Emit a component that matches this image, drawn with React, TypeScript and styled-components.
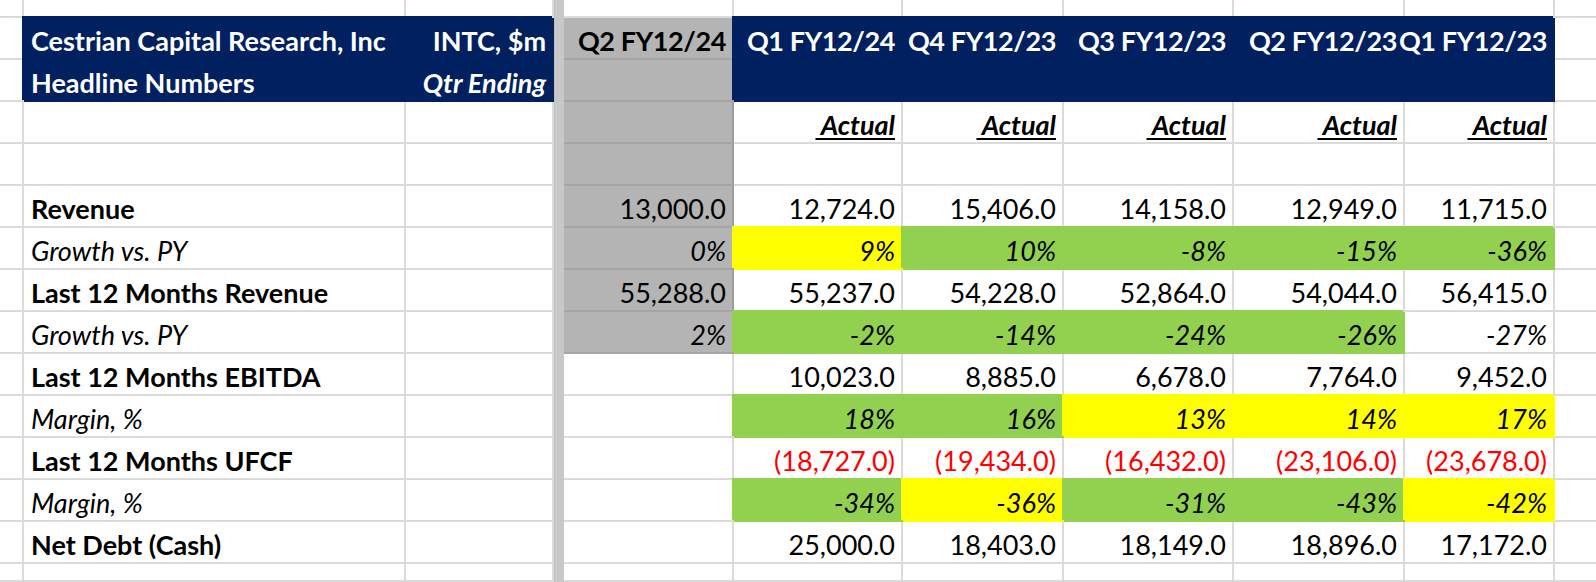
import React from 'react';
import styled, { createGlobalStyle } from 'styled-components';

type Kind = 'plain' | 'navy' | 'shade' | 'green' | 'yellow';
type Tone = 'ink' | 'white' | 'red';

interface CellSpec {
  text?: string;
  kind?: Kind;
  tone?: Tone;
  bold?: boolean;
  italic?: boolean;
  underline?: boolean;
  tight?: boolean;
  align?: 'left' | 'right';
}

const fills: Record<Kind, { bg: string; right: string; bottom: string; cover: boolean }> = {
  plain: { bg: '#ffffff', right: '#dadada', bottom: '#dadada', cover: false },
  navy: { bg: '#002060', right: '#06215c', bottom: '#002060', cover: true },
  shade: { bg: '#b4b4b4', right: '#9d9d9d', bottom: '#a5a5a5', cover: false },
  green: { bg: '#92d050', right: '#92d050', bottom: '#92d050', cover: true },
  yellow: { bg: '#ffff00', right: '#ffff00', bottom: '#ffff00', cover: true },
};

const tones: Record<Tone, string> = {
  ink: '#000000',
  white: '#ffffff',
  red: '#ff0000',
};

const GlobalStyle = createGlobalStyle`
  html, body {
    margin: 0;
    padding: 0;
    background: #ffffff;
    overflow: hidden;
  }
  body {
    font-family: Lato, 'Open Sans', sans-serif;
  }
`;

const Sheet = styled.div`
  display: grid;
  grid-template-columns: 24px 382px 148px 10px 170px 169px 161px 170px 171px 150px 60px;
  grid-template-rows: 18px repeat(13, 42px) 18px;
  width: 1596px;
  height: 582px;
  overflow: hidden;
  background: #ffffff;
`;

const Cell = styled.div<{
  $kind: Kind;
  $tone: Tone;
  $align: 'left' | 'right';
  $bold: boolean;
  $italic: boolean;
  $tight: boolean;
}>`
  box-sizing: border-box;
  display: flex;
  align-items: flex-end;
  justify-content: ${(p) => (p.$align === 'right' ? 'flex-end' : 'flex-start')};
  padding: 0 6px 1px 7px;
  background: ${(p) => fills[p.$kind].bg};
  border-right: 2px solid ${(p) => fills[p.$kind].right};
  border-bottom: 2px solid ${(p) => fills[p.$kind].bottom};
  box-shadow: ${(p) => (fills[p.$kind].cover ? `-2px -2px 0 0 ${fills[p.$kind].bg}` : 'none')};
  color: ${(p) => tones[p.$tone]};
  font-size: 27px;
  line-height: 32px;
  font-weight: ${(p) => (p.$bold ? 700 : 400)};
  font-style: ${(p) => (p.$italic ? 'italic' : 'normal')};
  letter-spacing: ${(p) => (p.$tight ? '-0.4px' : 'normal')};
  white-space: pre;
`;

const Underlined = styled.span`
  text-decoration: underline;
  text-decoration-thickness: 2px;
  text-underline-offset: 3px;
  text-decoration-skip-ink: none;
`;

const Splitter = styled.div`
  background: #c8c8c8;
  border-left: 1px solid #bfbfbf;
`;

const quarters = ['Q1 FY12/24', 'Q4 FY12/23', 'Q3 FY12/23', 'Q2 FY12/23', 'Q1 FY12/23'];

interface Metric {
  label: string;
  emphasis: 'bold' | 'italic';
  forecast?: string;
  shaded?: boolean;
  tone?: Tone;
  values: [string, Kind?][];
}

const metrics: Metric[] = [
  {
    label: 'Revenue',
    emphasis: 'bold',
    forecast: '13,000.0',
    shaded: true,
    values: [['12,724.0'], ['15,406.0'], ['14,158.0'], ['12,949.0'], ['11,715.0']],
  },
  {
    label: 'Growth vs. PY',
    emphasis: 'italic',
    forecast: '0%',
    shaded: true,
    values: [['9%', 'yellow'], ['10%', 'green'], ['-8%', 'green'], ['-15%', 'green'], ['-36%', 'green']],
  },
  {
    label: 'Last 12 Months Revenue',
    emphasis: 'bold',
    forecast: '55,288.0',
    shaded: true,
    values: [['55,237.0'], ['54,228.0'], ['52,864.0'], ['54,044.0'], ['56,415.0']],
  },
  {
    label: 'Growth vs. PY',
    emphasis: 'italic',
    forecast: '2%',
    shaded: true,
    values: [['-2%', 'green'], ['-14%', 'green'], ['-24%', 'green'], ['-26%', 'green'], ['-27%']],
  },
  {
    label: 'Last 12 Months EBITDA',
    emphasis: 'bold',
    values: [['10,023.0'], ['8,885.0'], ['6,678.0'], ['7,764.0'], ['9,452.0']],
  },
  {
    label: 'Margin, %',
    emphasis: 'italic',
    values: [['18%', 'green'], ['16%', 'green'], ['13%', 'yellow'], ['14%', 'yellow'], ['17%', 'yellow']],
  },
  {
    label: 'Last 12 Months UFCF',
    emphasis: 'bold',
    tone: 'red',
    values: [['(18,727.0)'], ['(19,434.0)'], ['(16,432.0)'], ['(23,106.0)'], ['(23,678.0)']],
  },
  {
    label: 'Margin, %',
    emphasis: 'italic',
    values: [['-34%', 'green'], ['-36%', 'yellow'], ['-31%', 'green'], ['-43%', 'green'], ['-42%', 'yellow']],
  },
  {
    label: 'Net Debt (Cash)',
    emphasis: 'bold',
    values: [['25,000.0'], ['18,403.0'], ['18,149.0'], ['18,896.0'], ['17,172.0']],
  },
];

// each row is B..I (label, unit, forecast, five quarters); A, the splitter and J are added around it
const blankRow = (forecastKind: Kind = 'plain'): CellSpec[] => [
  {},
  {},
  { kind: forecastKind },
  {},
  {},
  {},
  {},
  {},
];

const buildRows = (): CellSpec[][] => {
  const head1: CellSpec[] = [
    { text: 'Cestrian Capital Research, Inc', kind: 'navy', tone: 'white', bold: true, align: 'left' },
    { text: 'INTC, $m', kind: 'navy', tone: 'white', bold: true },
    { text: 'Q2 FY12/24', kind: 'shade', bold: true, tight: true },
    ...quarters.map((q): CellSpec => ({ text: q, kind: 'navy', tone: 'white', bold: true, tight: true })),
  ];
  const head2: CellSpec[] = [
    { text: 'Headline Numbers', kind: 'navy', tone: 'white', bold: true, align: 'left' },
    { text: 'Qtr Ending', kind: 'navy', tone: 'white', bold: true, italic: true },
    { kind: 'shade' },
    ...quarters.map((): CellSpec => ({ kind: 'navy' })),
  ];
  const status: CellSpec[] = [
    {},
    {},
    { kind: 'shade' },
    ...quarters.map((): CellSpec => ({ text: ' Actual', bold: true, italic: true, underline: true })),
  ];
  const body = metrics.map((m): CellSpec[] => {
    const italic = m.emphasis === 'italic';
    return [
      { text: m.label, bold: !italic, italic, align: 'left' },
      {},
      { text: m.forecast, kind: m.shaded ? 'shade' : 'plain', italic },
      ...m.values.map(([text, kind]): CellSpec => ({ text, kind: kind ?? 'plain', italic, tone: m.tone })),
    ];
  });
  return [blankRow(), head1, head2, status, blankRow('shade'), ...body, blankRow()];
};

const SheetCell: React.FC<{ spec: CellSpec }> = ({ spec }) => (
  <Cell
    $kind={spec.kind ?? 'plain'}
    $tone={spec.tone ?? 'ink'}
    $align={spec.align ?? 'right'}
    $bold={!!spec.bold}
    $italic={!!spec.italic}
    $tight={!!spec.tight}
  >
    {spec.underline ? <Underlined>{spec.text}</Underlined> : spec.text}
  </Cell>
);

const App: React.FC = () => {
  const rows = buildRows();
  return (
    <>
      <GlobalStyle />
      <Sheet>
        {rows.map((row, r) => (
          <React.Fragment key={r}>
            <SheetCell spec={{}} />
            <SheetCell spec={row[0]} />
            <SheetCell spec={row[1]} />
            <Splitter />
            {row.slice(2).map((spec, c) => (
              <SheetCell key={c} spec={spec} />
            ))}
            <SheetCell spec={{}} />
          </React.Fragment>
        ))}
      </Sheet>
    </>
  );
};

export default App;
